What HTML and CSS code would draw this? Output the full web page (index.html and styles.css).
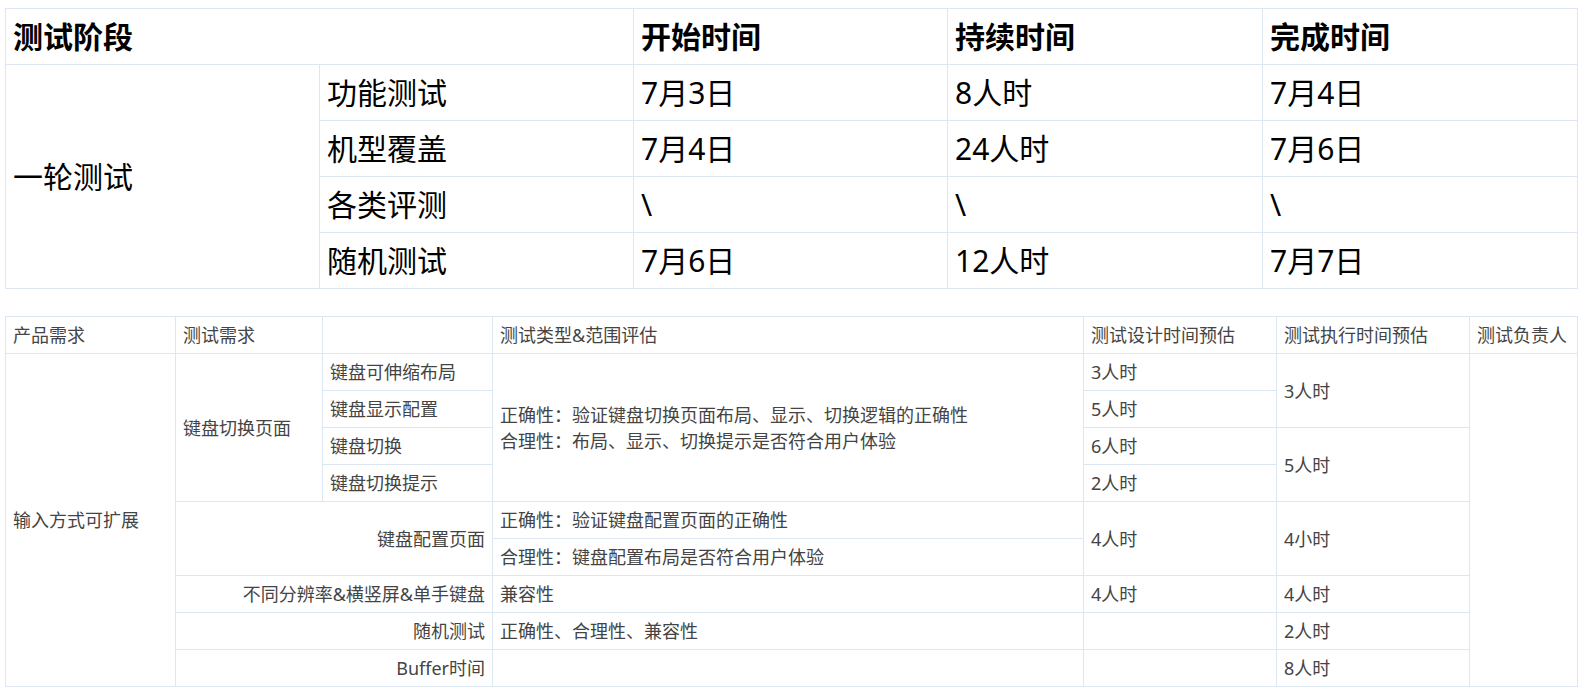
FILE: index.html
```html
<!DOCTYPE html>
<html lang="zh-CN">
<head>
<meta charset="utf-8">
<title>测试计划</title>
<link rel="stylesheet" href="styles.css">
</head>
<body>
<table class="plan">
  <colgroup>
    <col class="p1"><col class="p2"><col class="p3"><col class="p4"><col class="p5">
  </colgroup>
  <tr>
    <th colspan="2">测试阶段</th>
    <th>开始时间</th>
    <th>持续时间</th>
    <th>完成时间</th>
  </tr>
  <tr>
    <td rowspan="4">一轮测试</td>
    <td>功能测试</td>
    <td>7月3日</td>
    <td>8人时</td>
    <td>7月4日</td>
  </tr>
  <tr>
    <td>机型覆盖</td>
    <td>7月4日</td>
    <td>24人时</td>
    <td>7月6日</td>
  </tr>
  <tr>
    <td>各类评测</td>
    <td>\</td>
    <td>\</td>
    <td>\</td>
  </tr>
  <tr>
    <td>随机测试</td>
    <td>7月6日</td>
    <td>12人时</td>
    <td>7月7日</td>
  </tr>
</table>

<table class="detail">
  <colgroup>
    <col class="d1"><col class="d2"><col class="d3"><col class="d4"><col class="d5"><col class="d6"><col class="d7">
  </colgroup>
  <tr>
    <td>产品需求</td>
    <td>测试需求</td>
    <td></td>
    <td>测试类型&amp;范围评估</td>
    <td>测试设计时间预估</td>
    <td>测试执行时间预估</td>
    <td>测试负责人</td>
  </tr>
  <tr>
    <td rowspan="9">输入方式可扩展</td>
    <td rowspan="4">键盘切换页面</td>
    <td>键盘可伸缩布局</td>
    <td rowspan="4">正确性：验证键盘切换页面布局、显示、切换逻辑的正确性<br>合理性：布局、显示、切换提示是否符合用户体验</td>
    <td>3人时</td>
    <td rowspan="2">3人时</td>
    <td rowspan="9"></td>
  </tr>
  <tr>
    <td>键盘显示配置</td>
    <td>5人时</td>
  </tr>
  <tr>
    <td>键盘切换</td>
    <td>6人时</td>
    <td rowspan="2">5人时</td>
  </tr>
  <tr>
    <td>键盘切换提示</td>
    <td>2人时</td>
  </tr>
  <tr>
    <td class="right" colspan="2" rowspan="2">键盘配置页面</td>
    <td>正确性：验证键盘配置页面的正确性</td>
    <td rowspan="2">4人时</td>
    <td rowspan="2">4小时</td>
  </tr>
  <tr>
    <td>合理性：键盘配置布局是否符合用户体验</td>
  </tr>
  <tr>
    <td class="right" colspan="2">不同分辨率&amp;横竖屏&amp;单手键盘</td>
    <td>兼容性</td>
    <td>4人时</td>
    <td>4人时</td>
  </tr>
  <tr>
    <td class="right" colspan="2">随机测试</td>
    <td>正确性、合理性、兼容性</td>
    <td></td>
    <td>2人时</td>
  </tr>
  <tr>
    <td class="right" colspan="2">Buffer时间</td>
    <td></td>
    <td></td>
    <td>8人时</td>
  </tr>
</table>
</body>
</html>
```

FILE: styles.css
```css
html, body {
  background: #ffffff;
}

body {
  margin: 8px 11px 8px 5px;
  font-family: "Noto Sans", "Noto Sans CJK SC", sans-serif;
}

table {
  border-collapse: collapse;
  table-layout: fixed;
  width: 1572px;
}

td, th {
  border: 1px solid #dde7f2;
  vertical-align: middle;
  text-align: left;
  padding: 0 7px;
  overflow: hidden;
}

.plan {
  font-size: 30px;
  color: #000;
}

.plan th {
  font-weight: bold;
}

.plan tr {
  height: 56px;
}

.plan td, .plan th {
  line-height: 40px;
}

.p1 { width: 314px; }
.p2 { width: 314px; }
.p3 { width: 314px; }
.p4 { width: 315px; }
.p5 { width: 315px; }

.detail {
  margin-top: 27px;
  font-size: 18px;
  color: #444;
}

.detail tr {
  height: 37px;
}

.detail td {
  line-height: 26px;
}

.detail td.right {
  text-align: right;
}

.d1 { width: 170px; }
.d2 { width: 147px; }
.d3 { width: 170px; }
.d4 { width: 591px; }
.d5 { width: 193px; }
.d6 { width: 193px; }
.d7 { width: 108px; }
```
